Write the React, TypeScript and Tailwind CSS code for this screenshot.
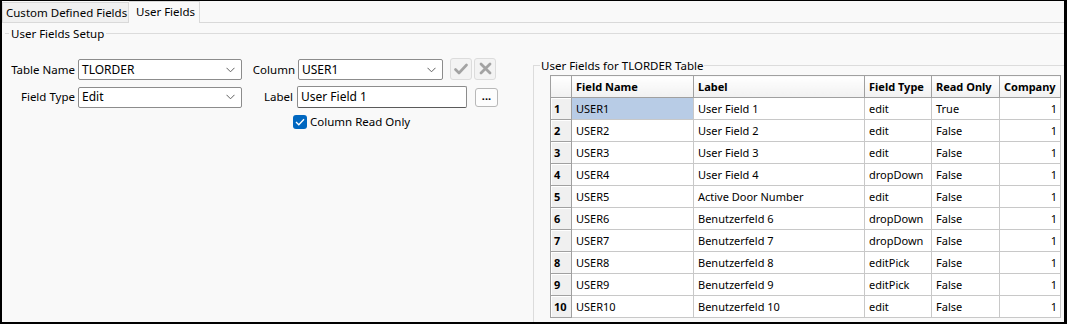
import React from "react";

const rows = [
  ["USER1", "User Field 1", "edit", "True"],
  ["USER2", "User Field 2", "edit", "False"],
  ["USER3", "User Field 3", "edit", "False"],
  ["USER4", "User Field 4", "dropDown", "False"],
  ["USER5", "Active Door Number", "edit", "False"],
  ["USER6", "Benutzerfeld 6", "dropDown", "False"],
  ["USER7", "Benutzerfeld 7", "dropDown", "False"],
  ["USER8", "Benutzerfeld 8", "editPick", "False"],
  ["USER9", "Benutzerfeld 9", "editPick", "False"],
  ["USER10", "Benutzerfeld 10", "edit", "False"],
];

function Chevron() {
  return (
    <svg width="9" height="6" viewBox="0 0 9 6" className="shrink-0">
      <path d="M0.5 0.8 L4.5 4.8 L8.5 0.8" fill="none" stroke="#5f5f5f" strokeWidth="1" />
    </svg>
  );
}

function Combo({ value, w }: { value: string; w: string }) {
  return (
    <div
      className={`${w} h-[21px] bg-white border border-[#8c8c8c] rounded-[2px] flex items-center pl-[3px] pr-[6px] justify-between`}
    >
      <span className="text-[12px] text-black leading-none">{value}</span>
      <Chevron />
    </div>
  );
}

export default function App() {
  return (
    <div className="w-[1067px] h-[324px] overflow-hidden border-l-2 border-t border-r-[3px] border-b-2 border-black bg-[#f9f9f9] font-['Noto_Sans',sans-serif] text-[11px] text-black flex flex-col">
      {/* Tabs */}
      <div className="h-[22px] flex items-end border-b border-[#d9d9d9] shrink-0">
        <div className="h-[20px] w-[127px] bg-[#f0f0f0] border border-b-0 border-[#d9d9d9] flex items-center pl-[3px] text-[11.5px]">
          Custom Defined Fields
        </div>
        <div className="h-[22px] w-[71px] -mb-px bg-[#f9f9f9] border border-l-0 border-b-0 border-[#d9d9d9] flex items-start pt-[1px] pl-[7px] text-[11.5px]">
          User Fields
        </div>
      </div>
      {/* Group title */}
      <div className="flex items-center mt-[2px] h-[17px] shrink-0">
        <div className="w-[4px] ml-[3px] h-px bg-[#dcdcdc]" />
        <span className="px-[2px] text-[11.5px] leading-none">User Fields Setup</span>
        <div className="flex-1 h-px bg-[#dcdcdc]" />
      </div>
      {/* Main */}
      <div className="flex flex-1 min-h-0">
        {/* Left form */}
        <div className="w-[531px] shrink-0 pt-[16px] flex flex-col">
          <div className="flex items-center h-[23px]">
            <div className="w-[73px] text-right text-[11.5px]">Table Name</div>
            <div className="ml-[3px]">
              <Combo value="TLORDER" w="w-[164px]" />
            </div>
            <div className="w-[53px] text-right text-[11.5px]">Column</div>
            <div className="ml-[3px]">
              <Combo value="USER1" w="w-[145px]" />
            </div>
            <div className="ml-[7px] w-[22px] h-[22px] -mt-[2px] rounded-[3px] border border-[#dcdcdc] bg-[#f3f3f3] flex items-center justify-center">
              <svg width="14" height="12" viewBox="0 0 14 12">
                <path d="M1.5 6.5 L5 10 L12.5 2" fill="none" stroke="#a3a3a3" strokeWidth="2.6" strokeLinecap="round" strokeLinejoin="round" />
              </svg>
            </div>
            <div className="ml-[2px] w-[22px] h-[22px] -mt-[2px] rounded-[3px] border border-[#dcdcdc] bg-[#f3f3f3] flex items-center justify-center">
              <svg width="13" height="13" viewBox="0 0 13 13">
                <path d="M2 2 L11 11 M11 2 L2 11" fill="none" stroke="#a3a3a3" strokeWidth="2.8" strokeLinecap="round" />
              </svg>
            </div>
          </div>
          <div className="flex items-center h-[22px] mt-[5px]">
            <div className="w-[73px] text-right text-[11.5px]">Field Type</div>
            <div className="ml-[3px]">
              <Combo value="Edit" w="w-[164px]" />
            </div>
            <div className="w-[51px] text-right text-[11.5px]">Label</div>
            <div className="ml-[4px] w-[170px] h-[22px] bg-white border border-[#8c8c8c] border-b-[#5a5a5a] rounded-[2px] flex items-center pl-[3px] text-[12px]">
              User Field 1
            </div>
            <div className="ml-[8px] w-[23px] h-[19px] rounded-[3px] border border-[#b8b8b8] bg-[#fdfdfd] flex items-center justify-center text-[11px] font-bold leading-none pb-[4px]">
              ...
            </div>
          </div>
          <div className="flex items-center h-[14px] mt-[7px] pl-[291px]">
            <div className="w-[14px] h-[14px] rounded-[3px] bg-[#0067c0] flex items-center justify-center">
              <svg width="10" height="8" viewBox="0 0 10 8">
                <path d="M1 4 L3.8 6.8 L9 1.2" fill="none" stroke="white" strokeWidth="1.3" />
              </svg>
            </div>
            <span className="ml-[3px] text-[11.5px]">Column Read Only</span>
          </div>
        </div>
        {/* Right group */}
        <div className="flex-1 flex flex-col pt-[23px]">
          <div className="flex items-center h-px">
            <div className="w-[7px] h-px bg-[#dcdcdc]" />
            <span className="px-px text-[11.5px] leading-none bg-[#f9f9f9]">User Fields for TLORDER Table</span>
            <div className="flex-1 h-px bg-[#dcdcdc]" />
          </div>
          <div className="flex-1 border-l border-[#dcdcdc] pl-[16px] pt-[9px]">
            <table className="table-fixed border-collapse w-[510px] text-[11px]">
              <colgroup>
                <col className="w-[21px]" />
                <col className="w-[122px]" />
                <col className="w-[171px]" />
                <col className="w-[67px]" />
                <col className="w-[68px]" />
                <col className="w-[61px]" />
              </colgroup>
              <thead>
                <tr className="h-[22px]">
                  {["", "Field Name", "Label", "Field Type", "Read Only", "Company"].map((h, i) => (
                    <th
                      key={i}
                      className="border border-[#a0a0a0] bg-gradient-to-b from-white to-[#f1f1f1] text-left font-bold px-[4px] py-0 leading-none whitespace-nowrap overflow-hidden"
                    >
                      {h}
                    </th>
                  ))}
                </tr>
              </thead>
              <tbody>
                {rows.map((r, i) => (
                  <tr key={i} className="h-[22px]">
                    <td className="border border-[#a0a0a0] bg-[#f0f0f0] font-bold px-[3px] leading-none shadow-[inset_1px_1px_0_#ffffff]">
                      {i + 1}
                    </td>
                    <td className={`border border-[#c8c8c8] px-[4px] leading-none ${i === 0 ? "bg-[#b8cce6]" : "bg-white"}`}>{r[0]}</td>
                    <td className="border border-[#c8c8c8] bg-white px-[4px] leading-none">{r[1]}</td>
                    <td className="border border-[#c8c8c8] bg-white px-[4px] leading-none">{r[2]}</td>
                    <td className="border border-[#c8c8c8] bg-white px-[4px] leading-none">{r[3]}</td>
                    <td className="border border-[#c8c8c8] bg-white px-[3px] leading-none text-right">1</td>
                  </tr>
                ))}
              </tbody>
            </table>
          </div>
        </div>
      </div>
    </div>
  );
}
